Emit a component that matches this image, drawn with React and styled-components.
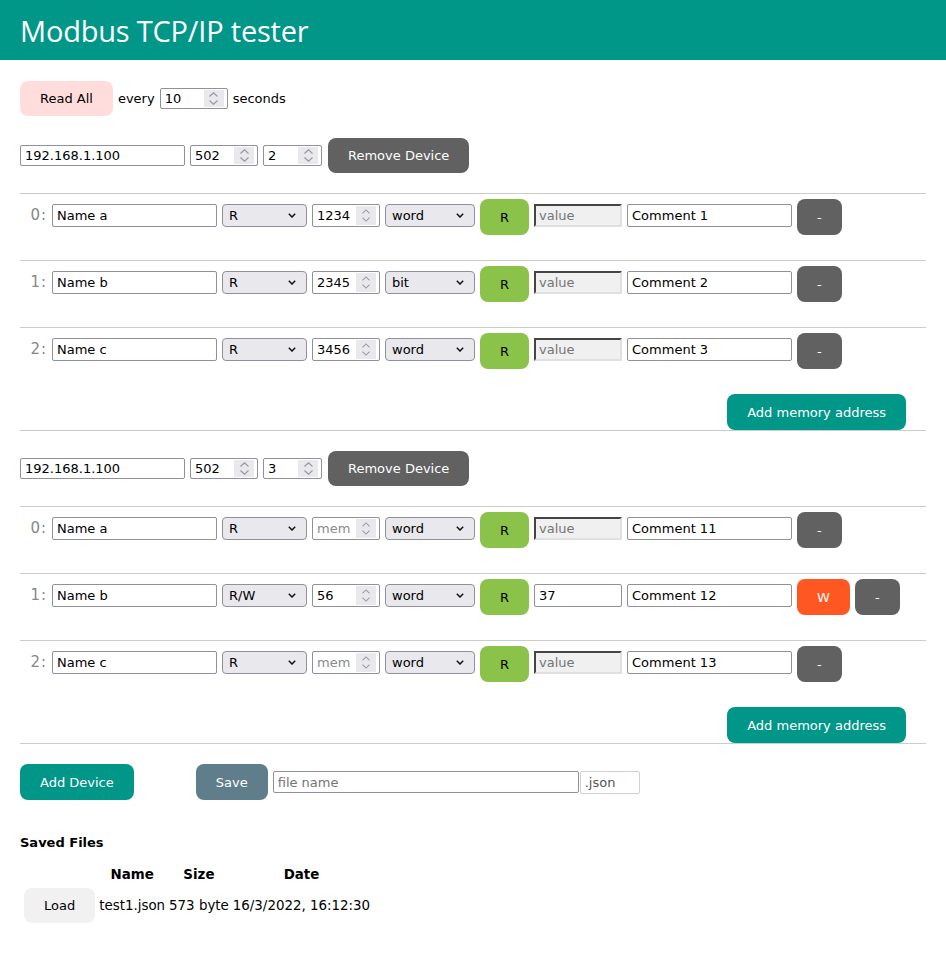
import React from 'react';
import styled, { createGlobalStyle } from 'styled-components';

const GlobalStyle = createGlobalStyle`
  * { box-sizing: border-box; }
  body {
    margin: 0;
    background: #fff;
    color: #000;
    font-family: "DejaVu Sans", Verdana, sans-serif;
    font-size: 13px;
  }
`;

const Header = styled.header`
  background: #009688;
  color: #fff;
  height: 60px;
  padding: 1px 20px 0;
  display: flex;
  align-items: center;
`;

const Title = styled.h1`
  margin: 0;
  font-family: "Open Sans", "Noto Sans", sans-serif;
  font-weight: 400;
  font-size: 29px;
  letter-spacing: -0.2px;
`;

const Main = styled.main`
  padding: 21px 20px 40px;
`;

const Bar = styled.div`
  display: flex;
  align-items: center;
  gap: 5px;
  margin-bottom: ${p => p.$mb || 0}px;
`;

const Button = styled.button`
  border: none;
  border-radius: 8px;
  height: ${p => p.$h || 36}px;
  padding: 0 20px;
  margin-left: ${p => p.$ml || 0}px;
  background: ${p => p.$bg};
  color: ${p => p.$fg || '#fff'};
  font-family: "DejaVu Sans", Verdana, sans-serif;
  font-size: 13px;
  white-space: nowrap;
  cursor: pointer;
`;

const TextInput = styled.input`
  width: ${p => p.$w}px;
  height: ${p => p.$h || 23}px;
  border: 1px solid #8f8f9d;
  border-radius: 2px;
  padding: 0 4px;
  background: #fff;
  color: #000;
  font-family: "DejaVu Sans", Verdana, sans-serif;
  font-size: 13px;
  &::placeholder { color: #757575; }
  &:disabled {
    background: #f0f0f0;
    border: 2px inset #e0e0e0;
    border-top-color: #999;
    border-left-color: #999;
    padding: 0 3px;
    border-radius: 0;
  }
`;

const Suffix = styled.input`
  width: 60px;
  height: 23px;
  margin-left: -4px;
  border: 1px solid #cfcfd4;
  border-radius: 2px;
  padding: 0 4px;
  background: #fff;
  color: #555;
  font-family: "DejaVu Sans", Verdana, sans-serif;
  font-size: 13px;
`;

const NumberBox = styled.div`
  display: inline-flex;
  align-items: stretch;
  width: ${p => p.$w}px;
  height: ${p => p.$h || 23}px;
  border: 1px solid #8f8f9d;
  border-radius: 2px;
  padding: 1px 3px 1px 1px;
  background: #fff;
`;

const NumberField = styled.input`
  flex: 1;
  min-width: 0;
  border: none;
  outline: none;
  padding: 0 3px;
  background: transparent;
  color: #000;
  font-family: "DejaVu Sans", Verdana, sans-serif;
  font-size: 13px;
  &::placeholder { color: #8a8a8a; }
`;

const Spin = styled.span`
  width: ${p => p.$w || 20}px;
  background: #e9e9ed;
  display: flex;
  flex-direction: column;
  align-items: center;
  justify-content: center;
  gap: 3px;
`;

const SelectWrap = styled.div`
  position: relative;
  width: ${p => p.$w}px;
  height: 23px;
`;

const Select = styled.select`
  appearance: none;
  width: 100%;
  height: 100%;
  border: 1px solid #8f8f9d;
  border-radius: 4px;
  background: #e9e9ed;
  padding: 0 6px;
  color: #000;
  font-family: "DejaVu Sans", Verdana, sans-serif;
  font-size: 13px;
`;

const Caret = styled.svg`
  position: absolute;
  right: 11px;
  top: 9px;
  pointer-events: none;
`;

const Device = styled.section``;

const DeviceHead = styled.div`
  display: flex;
  align-items: center;
  gap: 5px;
  padding: ${p => (p.$first ? 0 : 20)}px 0 20px;
`;

const MemRow = styled.div`
  display: flex;
  align-items: flex-start;
  gap: 5px;
  border-top: 1px solid #ccc;
  padding: 5px 0 25px;
  & > :not(button) { margin-top: 5px; }
`;

const Index = styled.span`
  width: 27px;
  line-height: 22px;
  text-align: right;
  color: #888;
  font-size: 15px;
  letter-spacing: 1px;
`;

const DeviceFoot = styled.div`
  display: flex;
  justify-content: flex-end;
  padding-right: 20px;
  border-bottom: 1px solid #ccc;
`;

const BottomBar = styled.div`
  display: flex;
  align-items: center;
  padding-top: 20px;
`;

const SaveGroup = styled.div`
  display: flex;
  align-items: center;
  gap: 5px;
  margin-left: 62px;
`;

const SavedTitle = styled.div`
  margin-top: 33px;
  font-weight: bold;
  line-height: 20px;
`;

const Files = styled.table`
  margin: 10px 0 0 1px;
  border-spacing: 2px 1px;
  font-size: 13.4px;
  th { font-weight: bold; text-align: center; padding: 1px; line-height: 20px; }
  td { padding: 1px; line-height: 20px; white-space: nowrap; }
`;

function Spinner({ size = 9 }) {
  return (
    <Spin $w={20}>
      <svg width={size} height="5" viewBox="0 0 9 5">
        <polyline points="0.5,4.5 4.5,0.7 8.5,4.5" fill="none" stroke="#9a9aa6" strokeWidth="1.2" />
      </svg>
      <svg width={size} height="5" viewBox="0 0 9 5">
        <polyline points="0.5,0.5 4.5,4.3 8.5,0.5" fill="none" stroke="#9a9aa6" strokeWidth="1.2" />
      </svg>
    </Spin>
  );
}

function NumberInput({ w, h, value, placeholder }) {
  return (
    <NumberBox $w={w} $h={h}>
      <NumberField defaultValue={value} placeholder={placeholder} />
      <Spinner size={h && h < 23 ? 9 : 8} />
    </NumberBox>
  );
}

function Dropdown({ w, value, options }) {
  return (
    <SelectWrap $w={w}>
      <Select defaultValue={value}>
        {options.map(o => <option key={o}>{o}</option>)}
      </Select>
      <Caret width="8" height="5" viewBox="0 0 8 5">
        <polyline points="0.8,0.8 4,4 7.2,0.8" fill="none" stroke="#111" strokeWidth="1.5" />
      </Caret>
    </SelectWrap>
  );
}

const devices = [
  {
    ip: '192.168.1.100', port: '502', unit: '2',
    rows: [
      { name: 'Name a', mode: 'R', addr: '1234', type: 'word', comment: 'Comment 1' },
      { name: 'Name b', mode: 'R', addr: '2345', type: 'bit', comment: 'Comment 2' },
      { name: 'Name c', mode: 'R', addr: '3456', type: 'word', comment: 'Comment 3' },
    ],
  },
  {
    ip: '192.168.1.100', port: '502', unit: '3',
    rows: [
      { name: 'Name a', mode: 'R', addr: '', type: 'word', comment: 'Comment 11' },
      { name: 'Name b', mode: 'R/W', addr: '56', type: 'word', comment: 'Comment 12', value: '37' },
      { name: 'Name c', mode: 'R', addr: '', type: 'word', comment: 'Comment 13' },
    ],
  },
];

function MemoryRow({ i, row }) {
  const writable = row.mode === 'R/W';
  return (
    <MemRow>
      <Index>{i}:</Index>
      <TextInput $w={165} defaultValue={row.name} />
      <Dropdown w={85} value={row.mode} options={['R', 'R/W']} />
      <NumberInput w={68} value={row.addr} placeholder="mem" />
      <Dropdown w={90} value={row.type} options={['word', 'bit']} />
      <Button $bg="#8bc34a" $fg="#000">R</Button>
      {writable
        ? <TextInput $w={88} defaultValue={row.value} />
        : <TextInput $w={88} placeholder="value" disabled />}
      <TextInput $w={165} defaultValue={row.comment} />
      {writable && <Button $bg="#ff5722">W</Button>}
      <Button $bg="#616161">-</Button>
    </MemRow>
  );
}

export default function App() {
  return (
    <>
      <GlobalStyle />
      <Header>
        <Title>Modbus TCP/IP tester</Title>
      </Header>
      <Main>
        <Bar $mb={22}>
          <Button $h={35} $bg="#ffdddd" $fg="#000">Read All</Button>
          <span>every</span>
          <NumberInput w={68} h={21} value="10" />
          <span>seconds</span>
        </Bar>

        {devices.map((d, di) => (
          <Device key={di}>
            <DeviceHead $first={di === 0}>
              <TextInput $w={165} $h={21} defaultValue={d.ip} />
              <NumberInput w={68} h={21} value={d.port} />
              <NumberInput w={59} h={21} value={d.unit} />
              <Button $h={35} $ml={1} $bg="#616161">Remove Device</Button>
            </DeviceHead>
            {d.rows.map((r, i) => <MemoryRow key={i} i={i} row={r} />)}
            <DeviceFoot>
              <Button $bg="#009688">Add memory address</Button>
            </DeviceFoot>
          </Device>
        ))}

        <BottomBar>
          <Button $bg="#009688">Add Device</Button>
          <SaveGroup>
            <Button $bg="#607d8b">Save</Button>
            <TextInput $w={306} $h={22} placeholder="file name" />
            <Suffix defaultValue=".json" readOnly />
          </SaveGroup>
        </BottomBar>

        <SavedTitle>Saved Files</SavedTitle>
        <Files>
          <thead>
            <tr><th></th><th>Name</th><th>Size</th><th>Date</th></tr>
          </thead>
          <tbody>
            <tr>
              <td><Button $h={35} $bg="#f1f1f1" $fg="#000">Load</Button></td>
              <td>test1.json</td>
              <td>573 byte</td>
              <td>16/3/2022, 16:12:30</td>
            </tr>
          </tbody>
        </Files>
      </Main>
    </>
  );
}
